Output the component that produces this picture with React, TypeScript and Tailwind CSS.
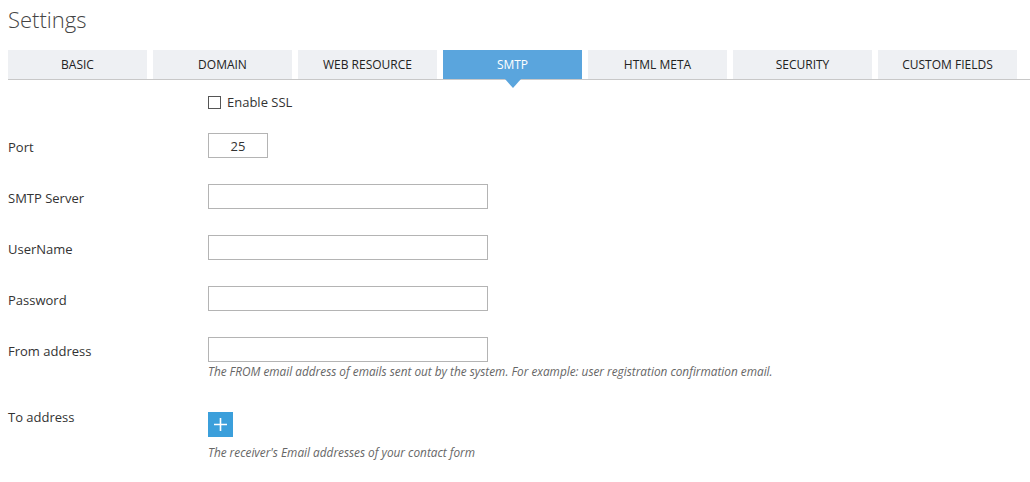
import React from 'react';

const tabs = ['BASIC', 'DOMAIN', 'WEB RESOURCE', 'SMTP', 'HTML META', 'SECURITY', 'CUSTOM FIELDS'];

const Field: React.FC<{ label: string; children: React.ReactNode }> = ({ label, children }) => (
  <div className="flex">
    <div className="w-[200px] pt-[5px] text-[13px] text-[#333]">{label}</div>
    <div>{children}</div>
  </div>
);

const App: React.FC = () => {
  const active = 'SMTP';
  return (
    <div className="bg-white w-[1030px] h-[482px] px-2 pt-[3px] text-[#333]" style={{ fontFamily: '"Open Sans", "Noto Sans", sans-serif' }}>
      <h1 className="text-[22px] font-light leading-[32px] text-[#444]">Settings</h1>

      {/* Tabs */}
      <div className="mt-[15px] flex gap-[6px] border-b border-[#c8c8c8] mr-[-8px]">
        {tabs.map((t) => (
          <div
            key={t}
            className={`relative w-[139px] h-[29px] flex items-center justify-center text-[12px] ${
              t === active ? 'bg-[#5aa5dd] text-white' : 'bg-[#eef0f3] text-[#222]'
            }`}
          >
            {t}
            {t === active && (
              <span className="absolute left-1/2 top-full -translate-x-1/2 w-0 h-0 border-l-[8px] border-r-[8px] border-t-[9px] border-l-transparent border-r-transparent border-t-[#5aa5dd]" />
            )}
          </div>
        ))}
      </div>

      {/* Form */}
      <div className="pl-[200px] mt-[13px] flex items-center gap-[6px] text-[13px]">
        <span className="w-[13px] h-[13px] border border-[#555] bg-white" />
        <span>Enable SSL</span>
      </div>

      <div className="mt-[20px] flex flex-col gap-[26px]">
        <Field label="Port">
          <input
            defaultValue="25"
            className="w-[60px] h-[25px] border border-[#b4b4b4] text-center text-[13px] outline-none"
          />
        </Field>
        <Field label="SMTP Server">
          <input className="w-[280px] h-[25px] border border-[#b4b4b4] outline-none" />
        </Field>
        <Field label="UserName">
          <input className="w-[280px] h-[25px] border border-[#b4b4b4] outline-none" />
        </Field>
        <Field label="Password">
          <input type="password" className="w-[280px] h-[25px] border border-[#b4b4b4] outline-none" />
        </Field>
        <Field label="From address">
          <input className="w-[280px] h-[25px] border border-[#b4b4b4] outline-none" />
          <p className="mt-[1px] text-[11.8px] leading-[16px] italic text-[#666]">
            The FROM email address of emails sent out by the system. For example: user registration confirmation email.
          </p>
        </Field>
      </div>

      <div className="mt-[28px] flex">
        <div className="w-[200px] text-[13px] leading-[20px]">To address</div>
        <div>
          <button className="mt-[5px] w-[25px] h-[25px] bg-[#3b9fdb] flex items-center justify-center">
            <svg width="15" height="15" viewBox="0 0 15 15">
              <path d="M7.5 1v13M1 7.5h13" stroke="white" strokeWidth="1.6" />
            </svg>
          </button>
          <p className="mt-[7px] text-[11.8px] leading-[16px] italic text-[#666]">The receiver's Email addresses of your contact form</p>
        </div>
      </div>
    </div>
  );
};

export default App;
